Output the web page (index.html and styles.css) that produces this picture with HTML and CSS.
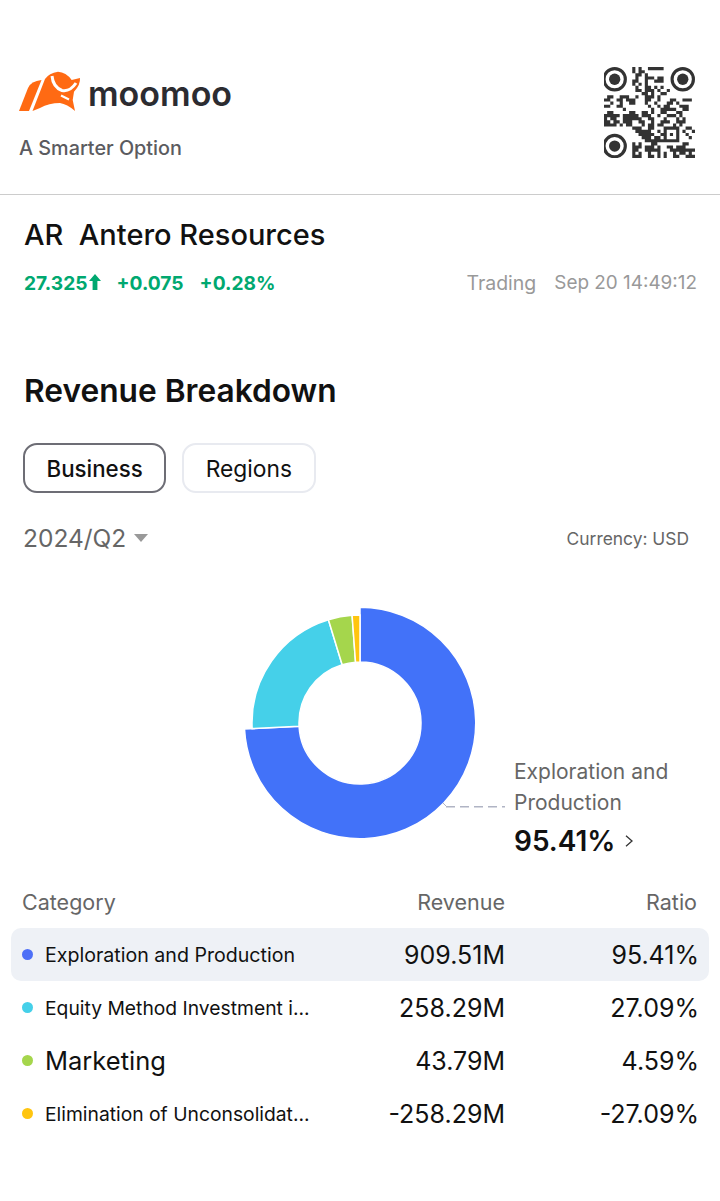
FILE: index.html
```html
<!DOCTYPE html>
<html lang="en">
<head>
    <meta charset="UTF-8">
    <meta name="viewport" content="width=device-width, initial-scale=1.0">
    <title>AR Revenue Breakdown</title>
    <link rel="stylesheet" href="styles.css">
</head>
<body>
    <header class="top">
        <div class="brand">
            <div class="logo">
                <svg class="bull" viewBox="0 0 62 41" width="62" height="41">
                    <path fill="#ff6a13" d="M0 40 L9 17 Q12 10 22.5 9 L10 40 Z"/>
                    <path fill="#ff6a13" d="M13.5 40 L26 8 Q30 2 39 .7 Q47 1 52.7 9 L61 7 Q61.5 14 55 20.7 L53.7 29 L56 40 Q48 33 41 32 Q30 32 21 37 Z"/>
                    <path fill="none" stroke="#fff" stroke-width="3" d="M33 5 Q34 16 43 19.5 Q51 21 57 12"/>
                    <path fill="none" stroke="#fff" stroke-width="2" d="M42 24.5 L50 28.5"/>
                </svg>
                <span class="wordmark">moomoo</span>
            </div>
            <div class="tagline">A Smarter Option</div>
        </div>
        <svg class="qr" viewBox="0 0 29 29" width="91" height="91">
            <g fill="none" stroke="#333">
                <circle cx="3.4" cy="3.9" r="3.4"/>
                <circle cx="25.1" cy="3.9" r="3.4"/>
                <circle cx="3.4" cy="25.2" r="3.4"/>
            </g>
            <g fill="#333">
                <circle cx="3.4" cy="3.9" r="1.8"/>
                <circle cx="25.1" cy="3.9" r="1.8"/>
                <circle cx="3.4" cy="25.2" r="1.8"/>
            </g>
            <path fill="none" stroke="#333" d="M9 .5h1m1 0h1m2 0h5M9 1.5h1m1 0h2M10 2.5h2m1 0h1M10 3.5h1m2 0h3m1 0h2M9 4.5h2m2 0h1m2 0h3M9 5.5h1m1 0h1m1 0h1M10 6.5h1m2 0h2m1 0h1m1 0h1M10 7.5h2m1 0h3m1 0h1m2 0h1M12 8.5h2m1 0h1m2 0h2M1 9.5h2m2 0h3m2 0h1m2 0h3m1 0h1M0 10.5h2m2 0h2m1 0h3m3 0h2m2 0h1m3 0h2m2 0h3M2 11.5h1m2 0h1m2 0h2m3 0h1m2 0h1m3 0h2m1 0h1M0 12.5h2m2 0h2m8 0h1m2 0h1m1 0h2m3 0h3M6 13.5h1m8 0h1m2 0h5m2 0h2M1 14.5h2m5 0h2m2 0h2m1 0h1m2 0h2m3 0h2M0 15.5h5m1 0h5m1 0h3m2 0h1m2 0h3m1 0h1M0 16.5h1m1 0h2m2 0h6m2 0h2m3 0h1m3 0h1m1 0h1M0 17.5h2m1 0h2m1 0h3m2 0h2m2 0h1m2 0h3m2 0h3M0 18.5h4m1 0h1m1 0h2m3 0h1m1 0h2m1 0h2m3 0h1m1 0h1M9 19.5h3m2 0h2m3 0h5m2 0h2M10 20.5h5m2 0h1m1 0h1m3 0h1m1 0h1m2 0h1M11 21.5h5m2 0h2m1 0h1m1 0h1m2 0h1M12 22.5h3m1 0h2m1 0h1m3 0h1m3 0h1M13 23.5h11M9 24.5h1m1 0h1m3 0h2m8 0h2M9 25.5h3m1 0h3m1 0h1m2 0h2m1 0h3M9 26.5h2m2 0h5m3 0h8M9 27.5h1m1 0h1m2 0h1m2 0h1m1 0h1m2 0h1m1 0h2m1 0h1M9 28.5h3m2 0h2m1 0h1m1 0h1m2 0h2m2 0h3"/>
        </svg>
    </header>

    <section class="quote">
        <h2 class="name">AR&nbsp; Antero Resources</h2>
        <div class="quote-row">
            <div class="prices">
                <span class="price">27.325<svg class="up" viewBox="0 0 12 16" width="12" height="16"><path fill="#00a870" d="M6 0 L12 7 H8.4 V16 H3.6 V7 H0 Z"/></svg></span>
                <span>+0.075</span>
                <span>+0.28%</span>
            </div>
            <div class="status">
                <span>Trading</span>
                <span class="time">Sep 20 14:49:12</span>
            </div>
        </div>
    </section>

    <h1 class="title">Revenue Breakdown</h1>

    <div class="tabs">
        <button class="tab active">Business</button>
        <button class="tab">Regions</button>
    </div>

    <div class="filters">
        <div class="period">2024/Q2<span class="caret"></span></div>
        <div class="currency">Currency: USD</div>
    </div>

    <div class="chart">
        <svg class="donut" viewBox="0 0 720 250" width="720" height="250">
            <g stroke="#fff" stroke-width="1.5">
                <!-- each slice is centred on 360,125 -->
                <path fill="#4272f9" d="M360 9.3 A115.7 115.7 0 1 1 244.5 131 L299.08 128.2 A61 61 0 1 0 360 64 Z"/>
                <path fill="#45d0e9" d="M252.15 130.6 A108 108 0 0 1 328.42 21.7 L342.16 66.7 A61 61 0 0 0 299.08 128.2 Z"/>
                <path fill="#a5d64c" d="M328.42 21.7 A108 108 0 0 1 352.09 17.3 L355.53 64.2 A61 61 0 0 0 342.16 66.7 Z"/>
                <path fill="#ffc50f" d="M352.09 17.3 A108 108 0 0 1 360 17 L360 64 A61 61 0 0 0 355.53 64.2 Z"/>
            </g>
            <path fill="none" stroke="#b0b4c4" stroke-width="1.5" stroke-dasharray="9 5" d="M446 208.7 H505"/>
            <path fill="none" stroke="#b0b4c4" stroke-width="1" d="M443 205 L446 208"/>
        </svg>
        <div class="callout">
            <div class="callout-name">Exploration and Production</div>
            <div class="callout-value">95.41%<svg class="chevron" viewBox="0 0 9 14" width="8" height="12"><path fill="none" stroke="#333" stroke-width="1.5" d="M1 1 L8 7 L1 13"/></svg></div>
        </div>
    </div>

    <div class="table">
        <div class="row head">
            <div>Category</div>
            <div class="num">Revenue</div>
            <div class="num">Ratio</div>
        </div>
        <div class="row selected">
            <div class="cat"><span class="dot blue"></span>Exploration and Production</div>
            <div class="num">909.51M</div>
            <div class="num">95.41%</div>
        </div>
        <div class="row">
            <div class="cat"><span class="dot cyan"></span>Equity Method Investment i...</div>
            <div class="num">258.29M</div>
            <div class="num">27.09%</div>
        </div>
        <div class="row">
            <div class="cat big"><span class="dot green"></span>Marketing</div>
            <div class="num">43.79M</div>
            <div class="num">4.59%</div>
        </div>
        <div class="row">
            <div class="cat"><span class="dot yellow"></span>Elimination of Unconsolidat...</div>
            <div class="num">-258.29M</div>
            <div class="num">-27.09%</div>
        </div>
    </div>
</body>
</html>
```

FILE: styles.css
```css
body {
    font-family: Inter, "Noto Sans", sans-serif;
    margin: 0;
    background: #fff;
    color: #111;
}
.top {
    height: 195px;
    box-sizing: border-box;
    border-bottom: 1px solid #ccc;
    padding: 67px 25px 0 19px;
    display: flex;
    justify-content: space-between;
    align-items: flex-start;
}
.brand {
    padding-top: 4px;
}
.logo {
    display: flex;
    align-items: center;
    gap: 7px;
    height: 41px;
}
.bull {
    flex-shrink: 0;
}
.wordmark {
    padding-top: 3px;
    font-size: 34px;
    font-weight: 600;
    color: #2c2c31;
}
.tagline {
    margin-top: 24px;
    font-size: 19.8px;
    font-weight: 500;
    color: #5b5b60;
}
.qr {
    filter: blur(0.5px);
}
.quote {
    padding: 23px 23px 0 24px;
}
.name {
    margin: 0;
    font-size: 29px;
    line-height: 34px;
    font-weight: 500;
}
.quote-row {
    margin-top: 19px;
    display: flex;
    justify-content: space-between;
    align-items: center;
}
.prices {
    display: flex;
    gap: 16px;
    color: #00a870;
    font-size: 19.2px;
    font-weight: 700;
}
.up {
    margin-left: 1px;
}
.status {
    display: flex;
    gap: 18px;
    font-size: 19.5px;
    color: #999;
}
.time {
    font-size: 18.9px;
    line-height: 24px;
}
.title {
    margin: 76px 0 0 24px;
    font-size: 31.7px;
    line-height: 40px;
    font-weight: 600;
}
.tabs {
    display: flex;
    gap: 16px;
    margin: 32px 0 0 23px;
}
.tab {
    height: 50px;
    padding: 0 21.5px;
    border-radius: 14px;
    border: 2px solid #e8eaf0;
    background: #fff;
    font-family: inherit;
    font-size: 22.8px;
    color: #111;
}
.tab.active {
    border-color: #6d6d75;
    font-size: 22.3px;
    font-weight: 500;
}
.filters {
    margin: 30px 31px 0 23px;
    display: flex;
    justify-content: space-between;
    align-items: center;
}
.period {
    font-size: 24.5px;
    color: #666;
    display: flex;
    align-items: center;
}
.caret {
    margin-left: 8px;
    border: 7px solid transparent;
    border-top: 8px solid #999;
    border-bottom: none;
}
.currency {
    font-size: 17.4px;
    color: #666;
}
.chart {
    position: relative;
    height: 250px;
    margin-top: 45px;
}
.donut {
    display: block;
}
.callout {
    position: absolute;
    left: 514px;
    top: 158px;
    width: 170px;
}
.callout-name {
    font-size: 21px;
    line-height: 31px;
    color: #666;
}
.callout-value {
    margin-top: 6px;
    font-size: 28px;
    font-weight: 600;
    display: flex;
    align-items: center;
    gap: 9px;
}
.table {
    margin: 41px 11px 0;
}
.row {
    display: grid;
    grid-template-columns: 1fr 180px 194px;
    align-items: center;
    height: 53px;
    padding: 0 10px 0 11px;
    font-size: 25px;
}
.head {
    grid-template-columns: 1fr 180px 192px;
    height: 26px;
    margin-bottom: 13px;
    padding: 0 12px 0 11px;
    font-size: 21.5px;
    color: #666;
}
.selected {
    background: #eef1f6;
    border-radius: 10px;
}
.num {
    text-align: right;
}
.cat {
    display: flex;
    align-items: center;
    font-size: 19.3px;
    white-space: nowrap;
}
.selected .cat {
    font-size: 19.6px;
}
.cat.big {
    font-size: 25.5px;
}
.dot {
    width: 11px;
    height: 11px;
    border-radius: 50%;
    margin-right: 12px;
    flex-shrink: 0;
}
.blue { background: #4d6ff7; }
.cyan { background: #45d0e9; }
.green { background: #a5d64c; }
.yellow { background: #ffc50f; }
```
